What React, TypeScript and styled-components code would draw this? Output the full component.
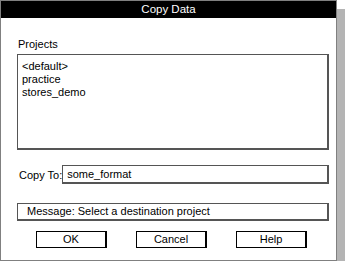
import React from "react";
import styled, { createGlobalStyle } from "styled-components";

const Global = createGlobalStyle`
  html, body { margin: 0; padding: 0; background: #ffffff; }
  body { font-family: "Liberation Sans", Arial, Helvetica, sans-serif; }
`;

const Window = styled.div`
  width: 337px;
  height: 261px;
  box-sizing: border-box;
  border: 1px solid #808080;
  background: #ffffff;
  box-shadow: 9px 9px 0 #b4b4b4;
  display: flex;
  flex-direction: column;
`;

const TitleBar = styled.div`
  height: 17px;
  background: #000000;
  color: #ffffff;
  font-size: 11.5px;
  line-height: 17px;
  text-align: center;
`;

const Body = styled.div`
  flex: 1;
  display: flex;
  flex-direction: column;
  padding: 19px 7px 0 16px;
  font-size: 11px;
  color: #000;
`;

const Label = styled.div`
  line-height: 14px;
  padding-left: 1px;
`;

const ListBox = styled.div`
  margin-top: 3px;
  height: 96px;
  box-sizing: border-box;
  border: 1px solid #555;
  border-right-width: 2px;
  border-bottom-width: 2px;
  padding: 5px 0 0 4px;
  display: flex;
  flex-direction: column;
`;

const Item = styled.div`
  line-height: 13px;
`;

const FieldRow = styled.div`
  margin-top: 15px;
  display: flex;
  align-items: center;
`;

const FieldLabel = styled.span`
  padding-left: 2px;
  white-space: nowrap;
`;

const Input = styled.div`
  flex: 1;
  height: 19px;
  box-sizing: border-box;
  border: 1px solid #555;
  border-right-width: 2px;
  border-bottom-width: 2px;
  padding-left: 4px;
  line-height: 16px;
`;

const MessageBox = styled.div`
  margin-top: 19px;
  height: 18px;
  box-sizing: border-box;
  border: 1px solid #555;
  border-right-width: 2px;
  border-bottom-width: 2px;
  padding-left: 9px;
  line-height: 15px;
`;

const ButtonRow = styled.div`
  margin-top: 10px;
  display: flex;
  gap: 29px;
  padding-left: 19px;
`;

const Button = styled.div`
  width: 71px;
  height: 17px;
  box-sizing: border-box;
  border: 1px solid #000;
  border-right-width: 2px;
  text-align: center;
  line-height: 15px;
`;

export default function App() {
  return (
    <>
      <Global />
      <Window>
        <TitleBar>Copy Data</TitleBar>
        <Body>
          <Label>Projects</Label>
          <ListBox>
            <Item>&lt;default&gt;</Item>
            <Item>practice</Item>
            <Item>stores_demo</Item>
          </ListBox>
          <FieldRow>
            <FieldLabel>Copy To:</FieldLabel>
            <Input>some_format</Input>
          </FieldRow>
          <MessageBox>Message: Select a destination project</MessageBox>
          <ButtonRow>
            <Button>OK</Button>
            <Button>Cancel</Button>
            <Button>Help</Button>
          </ButtonRow>
        </Body>
      </Window>
    </>
  );
}
